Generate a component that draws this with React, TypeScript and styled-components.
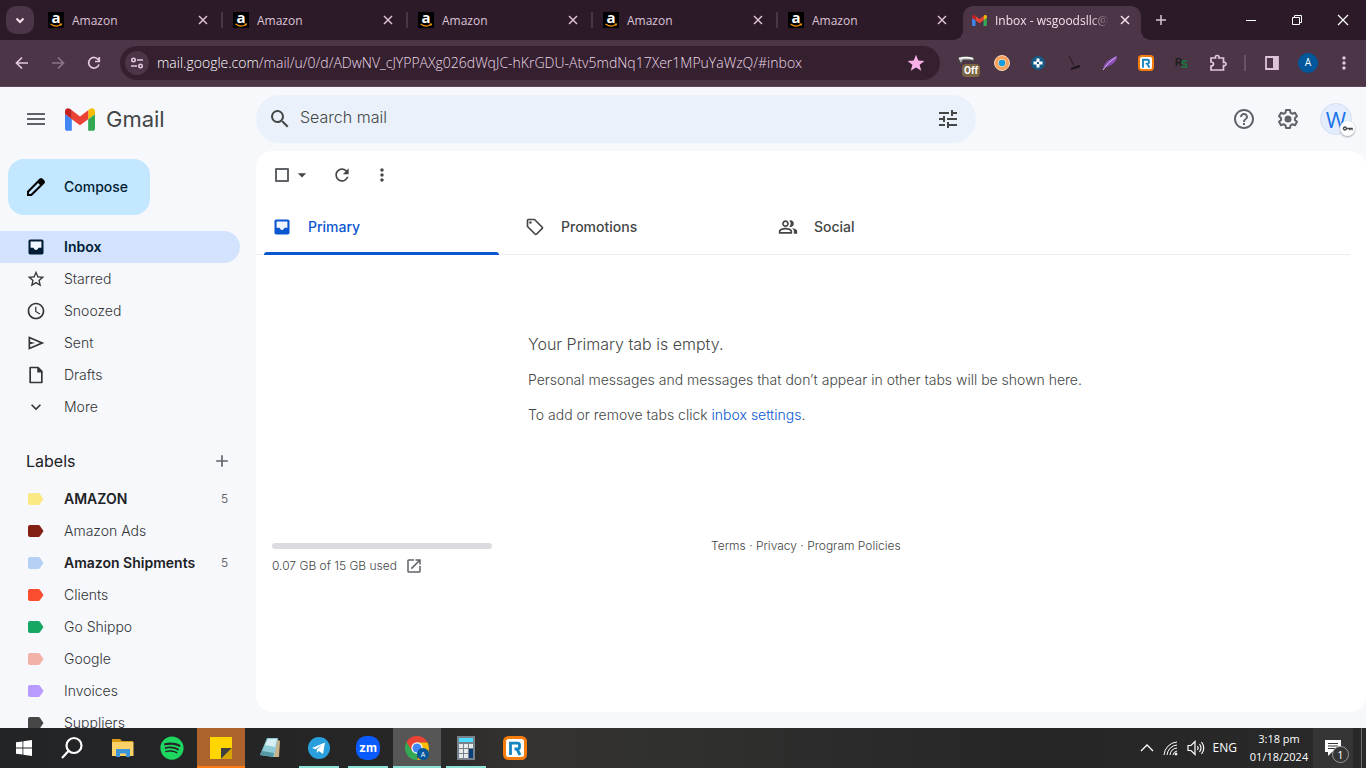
import React, { ReactNode } from "react";
import styled, { createGlobalStyle } from "styled-components";
import {
  MdAdd,
  MdArrowDropDown,
  MdExpandMore,
  MdHelpOutline,
  MdMenu,
  MdMoreVert,
  MdOpenInNew,
  MdOutlineLocalOffer,
  MdOutlinePeopleAlt,
  MdRefresh,
  MdSchedule,
  MdSearch,
  MdStarBorder,
  MdTune,
} from "react-icons/md";
import { FaSpotify } from "react-icons/fa";

const system = `"Open Sans", "Noto Sans", sans-serif`;
const google = `Inter, Roboto, sans-serif`;

const Global = createGlobalStyle`
  * { box-sizing: border-box; }
  body { margin: 0; font-family: ${google}; overflow: hidden; }
  button { border: 0; padding: 0; margin: 0; background: none; color: inherit; font: inherit; cursor: pointer; }
  a { color: inherit; text-decoration: none; }
  h1, h2, p { margin: 0; padding: 0; font-weight: inherit; }
  svg { display: block; flex: none; overflow: visible; }
`;

const Screen = styled.div`
  display: flex;
  flex-direction: column;
  height: 100vh;
  background: #f6f8fc;
`;

/* Browser chrome */
const Strip = styled.header`
  display: flex;
  height: 40px;
  flex: none;
  background: #2c1a29;
  color: #dcc3d6;
  font: 12px/16px ${system};
`;
const TabSearch = styled.button`
  width: 28px;
  height: 28px;
  margin: 6px 4px 0 6px;
  border-radius: 10px;
  background: #4b3546;
  display: grid;
  place-items: center;
`;
const Tab = styled.div<{ $active?: boolean }>`
  position: relative;
  display: flex;
  align-items: center;
  gap: 8px;
  flex: 0 1 ${(p) => (p.$active ? 178 : 185)}px;
  min-width: 0;
  margin-top: ${(p) => (p.$active ? 6 : 0)}px;
  padding: 0 ${(p) => (p.$active ? "8px 6px 9px" : "13px 0 10px")};
  background: ${(p) => (p.$active ? "#4b3546" : "transparent")};
  color: ${(p) => (p.$active ? "#f3e1ee" : "#dcc3d6")};
  border-radius: 10px 10px 0 0;
  &::before, &::after {
    content: "";
    display: ${(p) => (p.$active ? "block" : "none")};
    position: absolute;
    bottom: 0;
    width: 10px;
    height: 10px;
  }
  &::before { left: -10px; background: radial-gradient(circle at 0 0, transparent 10px, #4b3546 10px); }
  &::after { right: -10px; background: radial-gradient(circle at 100% 0, transparent 10px, #4b3546 10px); }
`;
const TabTitle = styled.span<{ $fade?: boolean }>`
  flex: 1;
  min-width: 0;
  padding-top: 1px;
  overflow: hidden;
  white-space: nowrap;
  mask-image: ${(p) => (p.$fade ? "linear-gradient(90deg, #000 84%, transparent)" : "none")};
`;
const TabClose = styled.button`
  width: 16px;
  height: 16px;
  display: grid;
  place-items: center;
`;
const TabRule = styled.i`
  width: 2px;
  height: 16px;
  margin: 0 -13px 0 2px;
  background: #4b3546;
`;
const NewTab = styled.button`
  width: 28px;
  margin-left: 6px;
  display: grid;
  place-items: center;
`;
const WindowControls = styled.div`
  display: flex;
  margin-left: auto;
  color: #fff;
`;
const WindowButton = styled.button`
  width: 46px;
  display: grid;
  place-items: center;
`;
const NavBar = styled.nav`
  display: flex;
  align-items: center;
  height: 47px;
  flex: none;
  padding: 0 4px;
  background: #4b3546;
  border-bottom: 1px solid #5d4a59;
  color: #e4c8dc;
`;
const NavButton = styled.button<{ $dim?: boolean }>`
  width: 36px;
  height: 36px;
  display: grid;
  place-items: center;
  color: ${(p) => (p.$dim ? "#8b7385" : "#e4c8dc")};
`;
const Address = styled.div`
  display: flex;
  align-items: center;
  flex: 1;
  height: 34px;
  min-width: 0;
  margin-left: 8px;
  padding: 0 15px 0 5px;
  gap: 8px;
  border-radius: 17px;
  background: #34202f;
`;
const SiteInfo = styled.button`
  width: 24px;
  height: 24px;
  border-radius: 50%;
  background: #4b3546;
  display: grid;
  place-items: center;
`;
const Url = styled.div`
  flex: 1;
  min-width: 0;
  overflow: hidden;
  white-space: nowrap;
  color: #ecd9e7;
  font: 300 14px/20px ${system};
  b { font-weight: 300; color: #fff; }
`;
const Extensions = styled.div`
  display: flex;
  align-items: center;
  margin-left: 8px;
`;
const Ext = styled.button`
  position: relative;
  width: 36px;
  height: 36px;
  display: grid;
  place-items: center;
`;
const OffBadge = styled.span`
  position: absolute;
  left: 14px;
  top: 19px;
  padding: 0 2px;
  border-radius: 4px;
  background: #7b6545;
  color: #fff;
  font: 700 10px/13px Roboto, sans-serif;
`;
const ExtRule = styled.i`
  width: 2px;
  height: 16px;
  margin: 0 8px;
  background: #6a5264;
`;
const Profile = styled.span`
  width: 20px;
  height: 20px;
  border-radius: 50%;
  background: #01579b;
  color: #fff;
  font: 10px/20px Roboto, sans-serif;
  text-align: center;
`;

/* Mail */
const Mail = styled.div`
  display: flex;
  flex-direction: column;
  flex: 1;
  min-height: 0;
  color: #444746;
  font-size: 14px;
  font-weight: 300;
  line-height: 20px;
`;
const Header = styled.header`
  display: flex;
  align-items: center;
  height: 64px;
  flex: none;
  padding-right: 14px;
`;
const Brand = styled.div`
  display: flex;
  align-items: center;
  width: 256px;
  padding-left: 24px;
  color: #5f6368;
`;
const GmailMark = styled.a`
  display: flex;
  align-items: center;
  gap: 11px;
  margin-left: 17px;
  color: #444746;
  font: 22px/28px ${google};
`;
const SearchBox = styled.form`
  display: flex;
  align-items: center;
  flex: 0 1 720px;
  height: 48px;
  padding: 0 16px 0 12px;
  border-radius: 24px;
  background: #eaf1fb;
`;
const SearchField = styled.input`
  flex: 1;
  min-width: 0;
  margin-left: 8px;
  padding: 0 0 4px;
  border: 0;
  outline: 0;
  background: none;
  font: 300 16px/24px ${google};
  &::placeholder { color: #444746; opacity: 1; }
`;
const Account = styled.div`
  display: flex;
  align-items: center;
  gap: 20px;
  margin-left: auto;
  color: #5f6368;
`;
const Avatar = styled.button`
  position: relative;
  width: 32px;
  height: 32px;
  border-radius: 50%;
  border: 1px solid #d5dff2;
  background: #e4edfb;
  color: #1a73e8;
  font: 400 22px/28px "Open Sans", sans-serif;
`;
const KeyBadge = styled.span`
  position: absolute;
  right: -4px;
  bottom: -2px;
  width: 15px;
  height: 15px;
  border-radius: 50%;
  background: #fff;
  box-shadow: 0 1px 2px #9aa0a6;
  display: grid;
  place-items: center;
`;
const Columns = styled.div`
  display: flex;
  flex: 1;
  min-height: 0;
`;
const Side = styled.aside`
  width: 256px;
  flex: none;
  overflow: hidden;
  padding-top: 8px;
`;
const Compose = styled.button`
  display: flex;
  align-items: center;
  gap: 16px;
  height: 56px;
  margin: 0 0 16px 8px;
  padding: 0 22px 0 16px;
  border-radius: 16px;
  background: #c2e7ff;
  color: #001d35;
  font-weight: 500;
`;
const SideRow = styled.a<{ $active?: boolean; $bold?: boolean }>`
  display: flex;
  align-items: center;
  height: 32px;
  margin-right: 16px;
  padding: 0 12px 0 26px;
  gap: 18px;
  border-radius: 0 16px 16px 0;
  background: ${(p) => (p.$active ? "#d3e3fd" : "transparent")};
  color: ${(p) => (p.$active ? "#001d35" : p.$bold ? "#202124" : "#333536")};
  font-weight: ${(p) => (p.$active || p.$bold ? 600 : 300)};
`;
const Count = styled.span`
  margin-left: auto;
  font-size: 12px;
  font-weight: 300;
  color: #444746;
`;
const LabelsHead = styled.div`
  display: flex;
  align-items: center;
  justify-content: space-between;
  height: 44px;
  margin: 16px 24px 0 26px;
  color: #5f6368;
  h2 { font: 16px/24px ${google}; color: #202124; }
`;
const Panel = styled.main`
  flex: 1;
  min-width: 0;
  margin-bottom: 16px;
  padding-right: 16px;
  border-radius: 16px;
  background: #fff;
`;
const Tools = styled.div`
  display: flex;
  align-items: center;
  height: 48px;
  padding-left: 19px;
`;
const SelectBox = styled.input`
  appearance: none;
  width: 14px;
  height: 14px;
  margin: 0;
  border: 2px solid #5f6368;
  border-radius: 1px;
`;
const ToolButton = styled.button<{ $gap: number }>`
  margin-left: ${(p) => p.$gap}px;
`;
const Categories = styled.div`
  display: flex;
  height: 56px;
  border-bottom: 1px solid #eceff1;
`;
const Category = styled.button<{ $active?: boolean }>`
  position: relative;
  display: flex;
  align-items: center;
  gap: 16px;
  flex: 0 1 253px;
  padding-left: 16px;
  color: ${(p) => (p.$active ? "#0b57d0" : "#444746")};
  font-weight: 500;
  &::after {
    content: "";
    display: ${(p) => (p.$active ? "block" : "none")};
    position: absolute;
    left: 8px;
    right: 10px;
    bottom: -1px;
    height: 3px;
    border-radius: 3px 3px 0 0;
    background: #0b57d0;
  }
`;
const Empty = styled.section`
  padding: 77px 0 0 272px;
  h1 { font-size: 16px; line-height: 24px; margin-bottom: 14px; }
  p { margin-bottom: 15px; }
  a { color: #0b57d0; }
`;
const Foot = styled.footer`
  display: flex;
  padding: 98px 16px 0;
  font-size: 12px;
  line-height: 16px;
`;
const Storage = styled.div`
  flex: 0 1 220px;
`;
const Meter = styled.div`
  height: 6px;
  margin: 5px 0 8px;
  border-radius: 3px;
  background: #dadce0;
`;
const StorageText = styled.a`
  display: flex;
  align-items: center;
  gap: 8px;
  svg { color: #5f6368; }
`;
const Legal = styled.nav`
  margin-left: 219px;
`;

/* Taskbar */
const Taskbar = styled.footer`
  display: flex;
  height: 40px;
  flex: none;
  background: linear-gradient(90deg, #232426, #262626 30%, #353331 38%, #30302f 50%, #262626 75%, #292929);
  color: #fff;
`;
const Apps = styled.div`
  display: flex;
  gap: 1px;
  margin-left: 3px;
`;
const Task = styled.button<{ $line?: string; $fill?: string }>`
  position: relative;
  width: 48px;
  display: grid;
  place-items: center;
  background: ${(p) => p.$fill || "transparent"};
  &::after {
    content: "";
    display: ${(p) => (p.$line ? "block" : "none")};
    position: absolute;
    left: ${(p) => (p.$fill ? 0 : 4)}px;
    right: ${(p) => (p.$fill ? 0 : 4)}px;
    bottom: 0;
    height: 2px;
    background: ${(p) => p.$line};
  }
`;
const Tray = styled.div`
  display: flex;
  align-items: center;
  gap: 8px;
  margin-left: auto;
  font: 12px/18px ${system};
`;
const Clock = styled.div`
  width: 68px;
  font-size: 11px;
  text-align: center;
  white-space: nowrap;
`;
const Notices = styled.button`
  position: relative;
  width: 40px;
  height: 40px;
  margin: 0 0 0 -8px;
  background: #353535;
  display: grid;
  place-items: center;
`;
const NoticeCount = styled.span`
  position: absolute;
  left: 19px;
  top: 18px;
  width: 17px;
  height: 17px;
  border: 1px solid #999;
  border-radius: 50%;
  background: #353535;
  font: 11px/15px ${system};
`;
const DesktopEdge = styled.i`
  width: 5px;
  height: 40px;
  border-left: 1px solid #6c6c6c;
`;

/* Drawings */
const Stroke = ({ d, size = 16, width = 2, box = 16, color = "currentColor" }: { d: string; size?: number; width?: number; box?: number; color?: string }) => (
  <svg width={size} height={size} viewBox={`0 0 ${box} ${box}`} fill="none" stroke={color} strokeWidth={width}>
    <path d={d} />
  </svg>
);
const AmazonIcon = () => (
  <svg width="16" height="16" viewBox="0 0 16 16">
    <path fill="#000" d="M0 0h16v16H0z" />
    <text x="8" y="10.5" textAnchor="middle" fontFamily="Open Sans" fontWeight="700" fontSize="15" fill="#fff">a</text>
    <path d="M2.500 12Q8 15.800 12.500 12.800M11.500 12h2l-.6 1.600" fill="none" stroke="#ff9900" strokeWidth="1.100" />
  </svg>
);
const GmailIcon = ({ width, height }: { width: number; height: number }) => (
  <svg width={width} height={height} viewBox="52 42 88 66">
    <path fill="#4285f4" d="M58 108h14V74L52 59v43c0 3.320 2.690 6 6 6" />
    <path fill="#34a853" d="M120 108h14c3.320 0 6-2.690 6-6V59l-20 15" />
    <path fill="#fbbc04" d="M120 48v26l20-15v-8c0-7.420-8.470-11.650-14.400-7.200" />
    <path fill="#ea4335" d="M72 74V48l24 18 24-18v26L96 92" />
    <path fill="#c5221f" d="M52 51v8l20 15V48l-5.600-4.200c-5.940-4.450-14.400-.22-14.400 7.200" />
  </svg>
);
const Pencil = () => (
  <svg width="24" height="24" viewBox="0 0 24 24">
    <path d="M20.400 5.600l-2-2a2 2 0 0 0-2.800 0L3 16.200V21h4.800L20.400 8.400a2 2 0 0 0 0-2.800zM6.800 19H5v-1.800L14.100 8l1.900 1.900z" />
  </svg>
);
const InboxIcon = () => (
  <svg width="20" height="20" viewBox="0 0 24 24">
    <rect x="3" y="3" width="18" height="18" rx="2" fill="currentColor" />
    <path d="M5.500 5.500h13v7.500H15c-.5 1.500-1.500 2.500-3 2.500S9.500 14.500 9 13H5.500z" fill="#f2f6fe" />
  </svg>
);
const Draft = () => (
  <svg width="20" height="20" viewBox="0 0 24 24">
    <path d="M5 3h9.500L19 7.500V21H5z" fill="none" stroke="currentColor" strokeWidth="2" strokeLinejoin="round" />
    <path d="M13.500 2.500V9H20z" fill="currentColor" />
  </svg>
);
const Send = () => (
  <svg width="20" height="20" viewBox="0 0 24 24" fill="currentColor">
    <path d="M3 20V4l19 8zm2-3 11.850-5L5 7v3.500l6 1.500-6 1.500zm0 0V7z" />
  </svg>
);
const Gear = () => (
  <svg width="24" height="24" viewBox="0 0 24 24">
    <path
      fill="none"
      stroke="currentColor"
      strokeWidth="2"
      strokeLinejoin="round"
      d="M10 3h4l.5 2.700 1.900 1.100 2.600-1 2 3.500-2.100 1.700v2l2.100 1.700-2 3.500-2.600-1-1.900 1.100L14 21h-4l-.5-2.700-1.900-1.100-2.600 1-2-3.500L5.100 13v-2L3 9.300l2-3.500 2.600 1 1.900-1.100z"
    />
    <circle cx="12" cy="12" r="3.500" fill="currentColor" />
  </svg>
);
const Tag = ({ color }: { color: string }) => (
  <svg width="20" height="20" viewBox="0 0 20 20">
    <path fill={color} d="M4 4h8.500c.6 0 1 .2 1.400.7L17.500 10l-3.600 5.300c-.4.500-.8.700-1.400.7H4a2 2 0 0 1-2-2V6c0-1.100.9-2 2-2z" />
  </svg>
);
const RingIcon = ({ size }: { size: number }) => (
  <svg width={size} height={size} viewBox="0 0 24 24">
    <rect x="1.500" y="1.500" width="21" height="21" rx="4" fill="#fff" stroke="#f47c0c" strokeWidth="3" />
    <path d="M7.500 19V7.200h7q2 0 2 2v1.800q0 2-2 2h-3M14 13l3 6" fill="none" stroke="#1583bd" strokeWidth="2.800" />
  </svg>
);
const ChromeIcon = () => (
  <svg width="24" height="24" viewBox="0 0 24 24">
    <path d="M12 12v12A12 12 0 0 1 1.600 6z" fill="#34a853" />
    <path d="M1.600 6 7 15l5-8.500h10.600A12 12 0 0 0 1.600 6" fill="#ea4335" />
    <path d="M12 24l5.200-9L12 6.500h10.600A12 12 0 0 1 12 24" fill="#fbbc04" />
    <circle cx="12" cy="12" r="5.700" fill="#fff" />
    <circle cx="12" cy="12" r="4.500" fill="#4285f4" />
    <circle cx="18" cy="18" r="6" fill="#01579b" />
    <text x="18" y="20.500" textAnchor="middle" fontFamily="Roboto" fontSize="7" fill="#fff">A</text>
  </svg>
);

const closeD = "M4 4l8 8M12 4l-8 8";

const folders: { icon: ReactNode; name: string; active?: boolean }[] = [
  { icon: <InboxIcon />, name: "Inbox", active: true },
  { icon: <MdStarBorder size={20} />, name: "Starred" },
  { icon: <MdSchedule size={20} />, name: "Snoozed" },
  { icon: <Send />, name: "Sent" },
  { icon: <Draft />, name: "Drafts" },
  { icon: <MdExpandMore size={20} />, name: "More" },
];
const labels = [
  { name: "AMAZON", color: "#fbe983", count: 5 },
  { name: "Amazon Ads", color: "#822111" },
  { name: "Amazon Shipments", color: "#b6cff5", count: 5 },
  { name: "Clients", color: "#fb4c2f" },
  { name: "Go Shippo", color: "#16a765" },
  { name: "Google", color: "#f2b2a8" },
  { name: "Invoices", color: "#b99aff" },
  { name: "Suppliers", color: "#464646" },
];

const BrowserTop = () => (
  <>
    <Strip>
      <TabSearch aria-label="Search tabs"><Stroke d="M4.500 6.500 8 10l3.500-3.500" color="#f3e1ee" /></TabSearch>
      {[0, 1, 2, 3, 4].map((i) => (
        <Tab key={i}>
          <AmazonIcon />
          <TabTitle>Amazon</TabTitle>
          <TabClose aria-label="Close tab"><Stroke d={closeD} width={1.500} /></TabClose>
          {i < 4 ? <TabRule /> : null}
        </Tab>
      ))}
      <Tab $active>
        <GmailIcon width={15} height={11} />
        <TabTitle $fade>Inbox - wsgoodsllc@gmail.com</TabTitle>
        <TabClose aria-label="Close tab"><Stroke d={closeD} width={1.500} /></TabClose>
      </Tab>
      <NewTab aria-label="New tab"><Stroke d="M8 3v10M3 8h10" width={1.500} /></NewTab>
      <WindowControls>
        <WindowButton aria-label="Minimize"><Stroke d="M3 8.500h10" width={1} /></WindowButton>
        <WindowButton aria-label="Restore"><Stroke d="M3.500 5.500h7v7h-7zM5.500 5.500v-2h7v7h-2" width={1} /></WindowButton>
        <WindowButton aria-label="Close"><Stroke d="M3 3l10 10M13 3 3 13" width={1.200} /></WindowButton>
      </WindowControls>
    </Strip>
    <NavBar>
      <NavButton aria-label="Back"><Stroke d="M14 8H3M8 2.500 2.500 8 8 13.500" width={1.700} /></NavButton>
      <NavButton aria-label="Forward" $dim><Stroke d="M2 8h11M8 2.500 13.500 8 8 13.500" width={1.700} /></NavButton>
      <NavButton aria-label="Reload"><Stroke d="M13 9.500A5.300 5.300 0 1 1 12.500 5M13.300 2v4.500H9" width={1.700} /></NavButton>
      <Address>
        <SiteInfo aria-label="Site information">
          <svg width="16" height="16" viewBox="0 0 16 16" fill="none" stroke="#e4c8dc" strokeWidth="1.600">
            <circle cx="4.500" cy="5" r="1.700" /><path d="M8 5h6M2 11h6" /><circle cx="11.500" cy="11" r="1.700" />
          </svg>
        </SiteInfo>
        <Url><b>mail.google.com</b>/mail/u/0/d/ADwNV_cJYPPAXg026dWqJC-hKrGDU-Atv5mdNq17Xer1MPuYaWzQ/#inbox</Url>
        <svg width="18" height="18" viewBox="0 0 24 24" fill="#f9b1e8"><path d="m12 1 3 7.800 8.300.4-6.500 5.200 2.200 8L12 18l-7 4.400 2.200-8L.7 9.200 9 8.800z" /></svg>
      </Address>
      <Extensions>
        <Ext aria-label="Blocker">
          <svg width="18" height="16" viewBox="0 0 18 16"><path d="M1 3q7-3 16 0v3l-4-1H6L4 9z" fill="#bbb" stroke="#444" /><path d="M2 3.500q7-2 14 0" stroke="#fff" fill="none" strokeWidth="1.500" /></svg>
          <OffBadge>Off</OffBadge>
        </Ext>
        <Ext aria-label="Target">
          <svg width="18" height="18" viewBox="0 0 18 18"><circle cx="9" cy="9" r="7.500" fill="#f6a25c" stroke="#fbd9b5" /><circle cx="9" cy="9" r="4" fill="#fcd9b0" /><circle cx="9" cy="9" r="3.300" fill="#189ce0" /></svg>
        </Ext>
        <Ext aria-label="Keeper">
          <svg width="14" height="14" viewBox="0 0 14 14"><circle cx="7" cy="7" r="7" fill="#165a86" /><path d="M5.500 2.500h3v3h3v3h-3v3h-3v-3h-3v-3h3z" fill="#fff" /><path d="M6 6h2v2H6z" fill="#165a86" /></svg>
        </Ext>
        <Ext aria-label="Cart">
          <svg width="16" height="16" viewBox="0 0 16 16" fill="none" stroke="#1b1519"><path d="M3 1l5 10" strokeWidth="0.800" /><path d="M5 14l9-3" strokeWidth="2" /></svg>
        </Ext>
        <Ext aria-label="Feather">
          <svg width="16" height="16" viewBox="0 0 16 16"><path d="M1 14Q2 5 15 1q0 6-6 9-3 2-6 2z" fill="#8a4fb5" /><path d="M1 15Q5 8 14 2" stroke="#d9b8ee" fill="none" /></svg>
        </Ext>
        <Ext aria-label="Ring"><RingIcon size={16} /></Ext>
        <Ext aria-label="RS">
          <svg width="16" height="16" viewBox="0 0 16 16" fontFamily="Liberation Sans" fontWeight="700" fontSize="10"><text x="1" y="11" fill="#1d1d1d">R</text><text x="7" y="13" fill="#12803c">S</text></svg>
        </Ext>
        <Ext aria-label="Extensions">
          <Stroke size={20} box={20} width={1.700} d="M3 5h4.500q-.6-2.500 1.700-2.500T10.900 5H15.500v4.500q2.500-.5 2.500 1.500t-2.500 1.500V17H3v-4q2.500 0 2.500-2T3 9z" />
        </Ext>
        <ExtRule />
        <Ext aria-label="Side panel">
          <svg width="16" height="16" viewBox="0 0 16 16"><path d="M2 2h12v12H2z" fill="none" stroke="#dcc3d6" strokeWidth="1.800" /><path d="M9 2h5v12H9z" fill="#dcc3d6" /></svg>
        </Ext>
        <Ext aria-label="Profile"><Profile>A</Profile></Ext>
        <Ext aria-label="Menu"><MdMoreVert size={20} /></Ext>
      </Extensions>
    </NavBar>
  </>
);

const MailView = () => (
  <Mail>
    <Header>
      <Brand>
        <button aria-label="Main menu"><MdMenu size={24} /></button>
        <GmailMark href="#inbox"><GmailIcon width={30} height={23} />Gmail</GmailMark>
      </Brand>
      <SearchBox>
        <button type="button" aria-label="Search"><MdSearch size={24} /></button>
        <SearchField aria-label="Search mail" placeholder="Search mail" />
        <button type="button" aria-label="Search options"><MdTune size={24} /></button>
      </SearchBox>
      <Account>
        <button aria-label="Support"><MdHelpOutline size={24} /></button>
        <button aria-label="Settings"><Gear /></button>
        <Avatar aria-label="Account">
          W
          <KeyBadge><Stroke size={11} box={12} width={1.500} color="#444" d="M4.800 6a1.600 1.600 0 1 0-3.200 0 1.600 1.600 0 0 0 3.200 0H11v2M8.500 6v2" /></KeyBadge>
        </Avatar>
      </Account>
    </Header>
    <Columns>
      <Side>
        <Compose><Pencil />Compose</Compose>
        <nav>
          {folders.map((f) => (
            <SideRow key={f.name} href="#" $active={f.active}>{f.icon}{f.name}</SideRow>
          ))}
        </nav>
        <LabelsHead><h2>Labels</h2><button aria-label="Create new label"><MdAdd size={20} /></button></LabelsHead>
        <nav>
          {labels.map((l) => (
            <SideRow key={l.name} href="#" $bold={!!l.count}>
              <Tag color={l.color} />{l.name}{l.count ? <Count>{l.count}</Count> : null}
            </SideRow>
          ))}
        </nav>
      </Side>
      <Panel>
        <Tools>
          <SelectBox type="checkbox" aria-label="Select" />
          <ToolButton $gap={3} aria-label="Select options"><MdArrowDropDown size={20} /></ToolButton>
          <ToolButton $gap={20} aria-label="Refresh"><MdRefresh size={20} /></ToolButton>
          <ToolButton $gap={20} aria-label="More"><MdMoreVert size={20} /></ToolButton>
        </Tools>
        <Categories role="tablist">
          <Category role="tab" $active><InboxIcon />Primary</Category>
          <Category role="tab"><MdOutlineLocalOffer size={20} />Promotions</Category>
          <Category role="tab"><MdOutlinePeopleAlt size={20} />Social</Category>
        </Categories>
        <Empty>
          <h1>Your Primary tab is empty.</h1>
          <p>Personal messages and messages that don’t appear in other tabs will be shown here.</p>
          <p>To add or remove tabs click <a href="#settings">inbox settings</a>.</p>
        </Empty>
        <Foot>
          <Storage>
            <Meter />
            <StorageText href="#storage">0.07 GB of 15 GB used<MdOpenInNew size={18} /></StorageText>
          </Storage>
          <Legal><a href="#terms">Terms</a> · <a href="#privacy">Privacy</a> · <a href="#policies">Program Policies</a></Legal>
        </Foot>
      </Panel>
    </Columns>
  </Mail>
);

const mint = "#8ce3d5";
const BottomBar = () => (
  <Taskbar>
    <Task aria-label="Start"><svg width="16" height="16" viewBox="0 0 16 16" fill="#fff"><path d="M0 2.300 6.500 1.400v6.200H0zM7.300 1.300 16 0v7.600H7.300zM0 8.400h6.500v6.200L0 13.700zM7.300 8.400H16V16l-8.700-1.300z" /></svg></Task>
    <Task aria-label="Search"><Stroke size={24} box={24} width={2.200} d="M21.500 9.500a7.500 7.500 0 1 1-15 0 7.500 7.500 0 0 1 15 0zM8.500 15 2 22" /></Task>
    <Apps>
      <Task aria-label="File Explorer">
        <svg width="24" height="22" viewBox="0 0 24 22"><path d="M1 2h8l2 2h11v14H1z" fill="#d99a12" /><path d="M1 5h21.500v14H1z" fill="#fcd268" /><path d="M5 20v-8h14v8h-4v-3.500H9V20z" fill="#3e94d8" /></svg>
      </Task>
      <Task aria-label="Spotify"><FaSpotify size={24} color="#1ed760" /></Task>
      <Task aria-label="Sticky Notes" $line="#ff7a12" $fill="#ac642c"><svg width="22" height="22" viewBox="0 0 22 22"><path d="M0 0h22v11L11 22H0z" fill="#ffd500" /><path d="M11 11h11L11 22z" fill="#3f3f3f" /><path d="M22 11v11H11z" fill="#d7a400" /></svg></Task>
      <Task aria-label="Notepad"><svg width="24" height="24" viewBox="0 0 24 24"><path d="m18 3 4 2-1 16-6 0z" fill="#c9b28a" /><path d="M9 2h11l-4 19-14-2z" fill="#8fcbd6" /><path d="M10 3h9l-2 8-10-2z" fill="#d6eff3" /><path d="m2 19 13 2 1-4-12-2z" fill="#5598a5" /></svg></Task>
      <Task aria-label="Telegram" $line={mint}><svg width="22" height="22" viewBox="0 0 22 22"><circle cx="11" cy="11" r="11" fill="#2a9fdd" /><path d="m4 11 13-5.500L15 17l-4.200-3-2 2v-3.500L14 8l-6.500 4.200z" fill="#fff" /></svg></Task>
      <Task aria-label="Zoom" $line={mint}><svg width="24" height="24" viewBox="0 0 24 24"><rect width="24" height="24" rx="10" fill="#0b5cff" /><text x="12" y="16" textAnchor="middle" fontFamily="Inter" fontWeight="700" fontSize="12" fill="#fff">zm</text></svg></Task>
      <Task aria-label="Chrome" $line={mint} $fill="#565656"><ChromeIcon /></Task>
      <Task aria-label="Calculator" $line={mint}><svg width="18" height="24" viewBox="0 0 18 24"><path d="M0 0h18v24H0z" fill="#77828c" /><path d="M2 2h14v4H2z" fill="#4bdcff" /><path d="M2 8h4v4H2zm5 0h4v4H7zm5 0h4v4h-4zM2 13h4v4H2zm5 0h4v4H7zM2 18h4v4H2zm5 0h4v4H7z" fill="#e7e9eb" /><path d="M12 13h4v9h-4z" fill="#0c3f77" /></svg></Task>
      <Task aria-label="RingCentral"><RingIcon size={24} /></Task>
    </Apps>
    <Tray>
      <Stroke d="M2 11l6-6 6 6" width={1.300} />
      <svg width="16" height="16" viewBox="0 0 16 16" fill="none" stroke="#fff"><path d="M1 15A14 14 0 0 1 14 2M4 15A11 11 0 0 1 14 5M7 15a8 8 0 0 1 7-7M10 15a5 5 0 0 1 4-4" /><circle cx="13" cy="14" r="1" fill="#fff" /></svg>
      <Stroke size={18} box={18} width={1.200} d="M1 6.500h3l4-4v13l-4-4H1zM10.500 7q1.500 2 0 4M12.500 5q3 4 0 8M14.500 3q4.500 6 0 12" />
      <span>ENG</span>
      <Clock>3:18 pm<br />01/18/2024</Clock>
      <Notices aria-label="Notifications">
        <svg width="18" height="18" viewBox="0 0 18 18"><path d="M1 1h16v12H8l-4 4v-4H1z" fill="#fff" /><path d="M4 4.500h10M4 7h10M4 9.500h7" stroke="#353535" /></svg>
        <NoticeCount>1</NoticeCount>
      </Notices>
      <DesktopEdge />
    </Tray>
  </Taskbar>
);

export default function App() {
  return (
    <Screen>
      <Global />
      <BrowserTop />
      <MailView />
      <BottomBar />
    </Screen>
  );
}
